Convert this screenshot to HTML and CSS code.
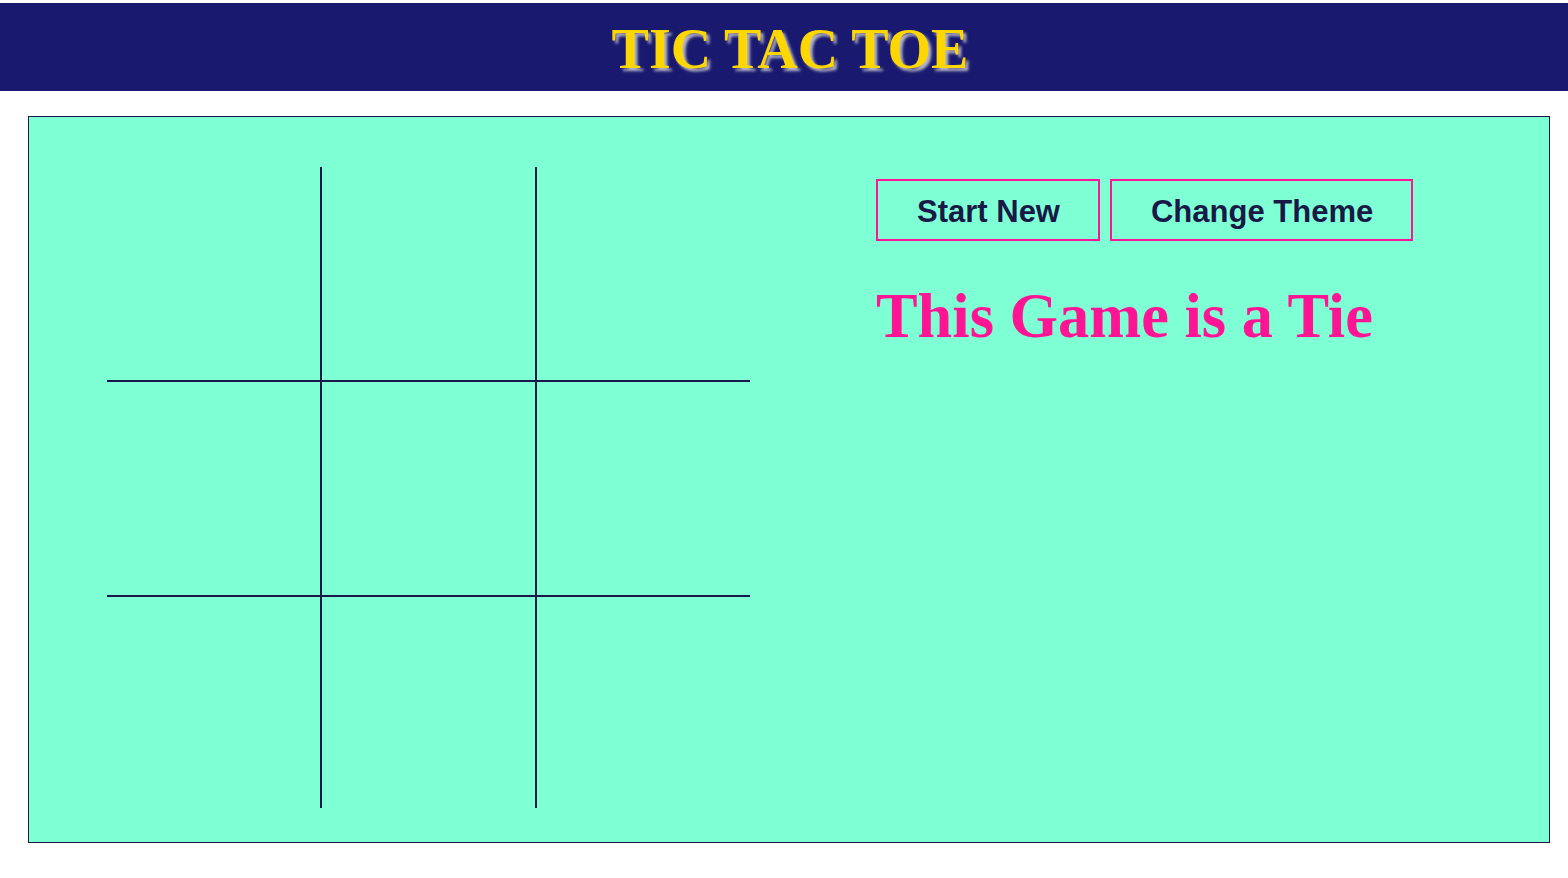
FILE: index.html
```html
<!DOCTYPE html>
<html>
<head>
<meta charset="utf-8">
<title>Tic Tac Toe</title>
<link rel="stylesheet" href="styles.css">
</head>
<body>
<header class="topbar">
  <h1 class="title">TIC TAC TOE</h1>
</header>
<main class="game">
  <div class="board">
    <div class="cell"></div><div class="cell"></div><div class="cell"></div>
    <div class="cell"></div><div class="cell"></div><div class="cell"></div>
    <div class="cell"></div><div class="cell"></div><div class="cell"></div>
  </div>
  <section class="side">
    <div class="controls">
      <button class="btn">Start New</button>
      <button class="btn">Change Theme</button>
    </div>
    <h2 class="status">This Game is a Tie</h2>
  </section>
</main>
</body>
</html>
```

FILE: styles.css
```css
html, body {
  margin: 0;
  padding: 0;
  background: #ffffff;
}
body {
  padding-top: 3px;
}
.topbar {
  background: #191970;
  height: 88px;
  display: flex;
  align-items: center;
  justify-content: center;
}
.title {
  margin: 0;
  font-family: "Liberation Serif", "Times New Roman", serif;
  font-weight: bold;
  font-size: 56px;
  line-height: 1;
  color: #ffd700;
  text-shadow: 3px 3px 3px #b8b8c8;
  padding: 3px 0 0 12px;
}
.game {
  margin: 25px 18px 0 28px;
  height: 725px;
  background: #7fffd4;
  border: 1px solid #191947;
  display: flex;
  align-items: flex-start;
}
.board {
  margin: 50px 0 0 78px;
  display: grid;
  grid-template-columns: 213px 213px 213px;
  grid-template-rows: 213px 213px 211px;
  gap: 2px;
  background: #191947;
}
.cell {
  background: #7fffd4;
}
.side {
  margin: 62px 0 0 126px;
  display: flex;
  flex-direction: column;
}
.controls {
  display: flex;
  gap: 10px;
}
.btn {
  font-family: "Liberation Sans", Arial, sans-serif;
  font-weight: bold;
  font-size: 31px;
  line-height: 36px;
  color: #191947;
  background: transparent;
  border: 2px solid #ff1493;
  padding: 13px 38px 9px 39px;
  margin: 0;
  cursor: pointer;
}
.status {
  margin: 44px 0 0 0;
  font-family: "Liberation Serif", "Times New Roman", serif;
  font-weight: bold;
  font-size: 62.4px;
  line-height: 1;
  color: #ff1493;
}
```
